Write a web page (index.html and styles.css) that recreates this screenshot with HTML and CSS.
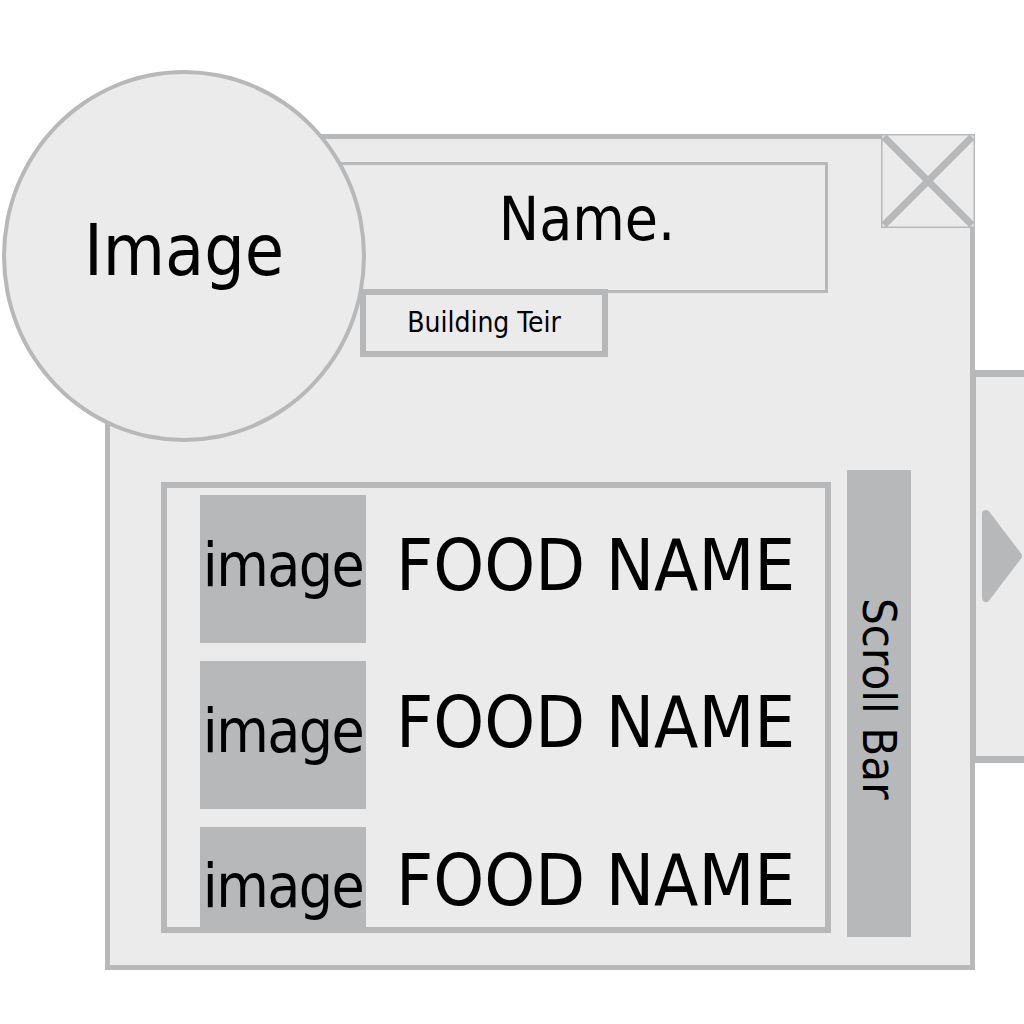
FILE: index.html
```html
<!DOCTYPE html>
<html lang="en">
<head>
  <meta charset="UTF-8">
  <title>Building Panel</title>
  <link rel="stylesheet" href="styles.css">
</head>
<body>
  <div class="screen">
    <!-- main window -->
    <div class="panel">
      <div class="avatar">Image</div>

      <div class="close-btn">
        <svg width="94" height="94" viewBox="0 0 94 94">
          <rect x="0.5" y="0.5" width="93" height="93" fill="#ebebeb" stroke="#b7b8ba" stroke-width="2"/>
          <path d="M3 3 L91 91 M91 3 L3 91" stroke="#b7b8ba" stroke-width="7"/>
        </svg>
      </div>

      <div class="name-box">Name.</div>
      <div class="tier-box">Building Teir</div>

      <div class="list-row">
        <div class="food-list">
          <div class="food-item">
            <div class="thumb">image</div>
            <div class="food-name">FOOD NAME</div>
          </div>
          <div class="food-item second">
            <div class="thumb">image</div>
            <div class="food-name">FOOD NAME</div>
          </div>
          <div class="food-item third">
            <div class="thumb">image</div>
            <div class="food-name">FOOD NAME</div>
          </div>
        </div>
        <div class="scroll-bar">Scroll Bar</div>
      </div>
    </div>

    <!-- next page tab -->
    <div class="side-tab">
      <svg width="44" height="96" viewBox="0 0 44 96">
        <path d="M6 6 L38 48 L6 90 Z" fill="#b7b8ba" stroke="#b7b8ba" stroke-width="8" stroke-linejoin="round"/>
      </svg>
    </div>
  </div>
</body>
</html>
```

FILE: styles.css
```css
* {
  margin: 0;
  padding: 0;
  box-sizing: border-box;
}

body {
  background: #fff;
  font-family: "DejaVu Sans Condensed", "DejaVu Sans", sans-serif;
  font-stretch: condensed;
  color: #000;
  overflow: hidden;
}

.screen {
  display: flex;
  align-items: flex-start;
  padding: 134px 0 0 105px;
  height: 1024px;
}

.panel {
  position: relative;
  width: 870px;
  height: 836px;
  border: 5px solid #b7b8ba;
  background: #ebebeb;
  flex-shrink: 0;
}

.avatar {
  position: absolute;
  left: -108px;
  top: -69px;
  width: 364px;
  height: 372px;
  border: 4px solid #b7b8ba;
  border-radius: 50%;
  background: #ebebeb;
  z-index: 2;
  display: flex;
  align-items: center;
  justify-content: center;
  padding-bottom: 12px;
  font-size: 71px;
  line-height: 1;
}

.close-btn {
  position: absolute;
  top: -5px;
  right: -5px;
  width: 94px;
  height: 94px;
}

.close-btn svg {
  display: block;
}

.name-box {
  margin: 23px 0 0 190px;
  width: 528px;
  height: 131px;
  border: 3px solid #b7b8ba;
  padding: 24px 0 0 46px;
  text-align: center;
  font-size: 60px;
  line-height: 1;
}

.tier-box {
  position: relative;
  z-index: 3;
  margin: -4px 0 0 250px;
  width: 248px;
  height: 68px;
  border: 6px solid #b7b8ba;
  background: #ebebeb;
  display: flex;
  align-items: center;
  justify-content: center;
  font-size: 28px;
  line-height: 1;
}

.list-row {
  display: flex;
  align-items: flex-start;
  margin-top: 113px;
  padding-left: 51px;
}

.food-list {
  margin-top: 12px;
  width: 670px;
  height: 451px;
  border: 6px solid #b7b8ba;
  padding: 7px 0 0 33px;
  overflow: hidden;
  display: flex;
  flex-direction: column;
  gap: 18px;
}

.food-item {
  display: flex;
  align-items: flex-start;
  flex-shrink: 0;
}

.thumb {
  width: 166px;
  height: 148px;
  background: #b7b8ba;
  display: flex;
  align-items: center;
  justify-content: center;
  padding-bottom: 8px;
  font-size: 60px;
  letter-spacing: -1.5px;
  line-height: 1;
}

.food-item.third .thumb {
  padding-bottom: 30px;
}

.food-name {
  margin: 34px 0 0 30px;
  font-size: 72px;
  line-height: 1;
  white-space: nowrap;
}

.food-item.second .food-name {
  margin-top: 25px;
}

.food-item.third .food-name {
  margin-top: 17px;
}

.scroll-bar {
  margin-left: 16px;
  width: 64px;
  height: 467px;
  background: #b7b8ba;
  display: flex;
  align-items: center;
  justify-content: center;
  padding-bottom: 10px;
  writing-mode: vertical-rl;
  font-size: 47px;
  line-height: 1;
}

.side-tab {
  flex: 1;
  margin: 236px 0 0 -6px;
  height: 393px;
  border: 7px solid #b7b8ba;
  border-right: none;
  background: #ebebeb;
  display: flex;
  align-items: center;
  padding: 0 0 22px 4px;
}

.side-tab svg {
  display: block;
}
```
